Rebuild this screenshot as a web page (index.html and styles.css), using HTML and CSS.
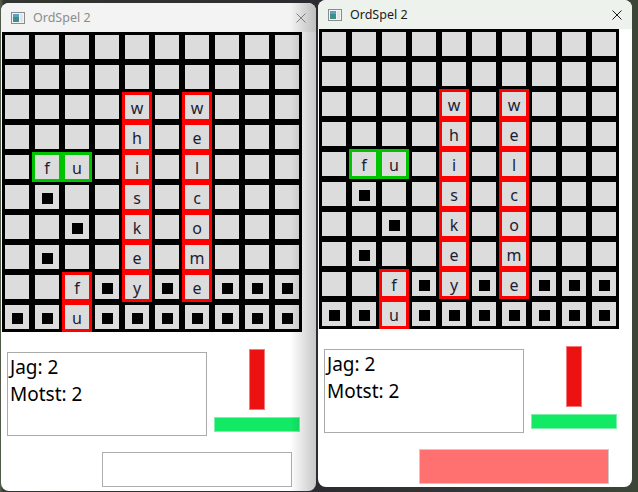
FILE: index.html
```html
<!DOCTYPE html>
<html lang="sv">
<head>
    <meta charset="UTF-8">
    <meta name="viewport" content="width=device-width, initial-scale=1.0">
    <title>OrdSpel 2</title>
    <link rel="stylesheet" href="styles.css">
</head>
<body>
    <div class="desktop">
        <div class="window inactive win-left">
            <div class="titlebar">
                <svg class="app-icon" width="14" height="12" viewBox="0 0 14 12">
                    <rect x="0.5" y="0.5" width="13" height="11" fill="#f4f4f4" stroke="#8a8a8a"/>
                    <rect x="2" y="2" width="6" height="8" fill="#3f8f86"/>
                    <rect x="2" y="2" width="6" height="3" fill="#5aa0c8"/>
                    <rect x="9" y="2" width="3" height="8" fill="#dfe6e8"/>
                </svg>
                <span class="title">OrdSpel 2</span>
                <svg class="close" width="10" height="10" viewBox="0 0 10 10">
                    <path d="M0.5 0.5 L9.5 9.5 M9.5 0.5 L0.5 9.5" stroke="currentColor" stroke-width="1"/>
                </svg>
            </div>
            <div class="board"></div>
            <div class="lower">
                <div class="score">
                    <div>Jag: 2</div>
                    <div>Motst: 2</div>
                </div>
                <div class="meter">
                    <div class="bar-red"></div>
                    <div class="bar-green"></div>
                </div>
            </div>
            <div class="action"></div>
        </div>

        <div class="window active win-right">
            <div class="titlebar">
                <svg class="app-icon" width="14" height="12" viewBox="0 0 14 12">
                    <rect x="0.5" y="0.5" width="13" height="11" fill="#f4f4f4" stroke="#8a8a8a"/>
                    <rect x="2" y="2" width="6" height="8" fill="#3f8f86"/>
                    <rect x="2" y="2" width="6" height="3" fill="#5aa0c8"/>
                    <rect x="9" y="2" width="3" height="8" fill="#dfe6e8"/>
                </svg>
                <span class="title">OrdSpel 2</span>
                <svg class="close" width="10" height="10" viewBox="0 0 10 10">
                    <path d="M0.5 0.5 L9.5 9.5 M9.5 0.5 L0.5 9.5" stroke="currentColor" stroke-width="1"/>
                </svg>
            </div>
            <div class="board"></div>
            <div class="lower">
                <div class="score">
                    <div>Jag: 2</div>
                    <div>Motst: 2</div>
                </div>
                <div class="meter">
                    <div class="bar-red"></div>
                    <div class="bar-green"></div>
                </div>
            </div>
            <div class="action pressed"></div>
        </div>
    </div>

    <script>
        // letters on the board, '#' = blocked square
        const board = [
            "..........",
            "..........",
            "....w.w...",
            "....h.e...",
            ".fu.i.l...",
            ".#..s.c...",
            "..#.k.o...",
            ".#..e.m...",
            "..f#y#e###",
            "##u#######"
        ];
        // r = word from opponent, g = own word
        const marks = [
            "..........",
            "..........",
            "....r.r...",
            "....r.r...",
            ".gg.r.r...",
            "....r.r...",
            "....r.r...",
            "....r.r...",
            "..r.r.r...",
            "..r......."
        ];

        document.querySelectorAll('.board').forEach(function(el) {
            for (let r = 0; r < 10; r++) {
                for (let c = 0; c < 10; c++) {
                    const cell = document.createElement('div');
                    cell.className = 'cell';
                    const ch = board[r][c];
                    const m = marks[r][c];
                    if (m === 'r') cell.classList.add('mark-red');
                    if (m === 'g') cell.classList.add('mark-green');
                    if (ch === '#') {
                        const block = document.createElement('span');
                        block.className = 'block';
                        cell.appendChild(block);
                    } else if (ch !== '.') {
                        cell.textContent = ch;
                    }
                    el.appendChild(cell);
                }
            }
        });
    </script>
</body>
</html>
```

FILE: styles.css
```css
* {
    box-sizing: border-box;
}
body {
    margin: 0;
    font-family: "Noto Sans", "DejaVu Sans", sans-serif;
}
.desktop {
    position: relative;
    width: 638px;
    height: 492px;
    overflow: hidden;
    background: linear-gradient(to right, #56604d 0px, #33352f 4px, #2c2b31 50%, #3b4636 100%);
}
.window {
    position: absolute;
    background-color: #fff;
    border-radius: 8px;
    overflow: hidden;
}
.win-left {
    left: 1px;
    top: 3px;
    width: 315px;
    height: 488px;
}
.win-right {
    left: 318px;
    top: 0;
    width: 314px;
    height: 487px;
}
/* shadow thrown by the active window */
.inactive::after {
    content: "";
    position: absolute;
    top: 0;
    right: 0;
    bottom: 0;
    width: 26px;
    background: linear-gradient(to right, rgba(0, 0, 0, 0), rgba(0, 0, 0, 0.22));
}
.titlebar {
    display: flex;
    align-items: center;
    height: 29px;
    padding: 0 10px 0 10px;
}
.inactive .titlebar {
    background-color: #f3f3f3;
    color: #8c8c8c;
}
.active .titlebar {
    background-color: #edf2ec;
    color: #1b1b1b;
}
.app-icon {
    flex: none;
}
.title {
    margin-left: 8px;
    font-size: 12.5px;
    flex: 1;
}
.close {
    flex: none;
}
.board {
    display: grid;
    grid-template-columns: repeat(10, 24px);
    grid-auto-rows: 24px;
    gap: 6px;
    width: 300px;
    height: 300px;
    margin-left: 1px;
    padding: 3px;
    background-color: #000;
}
.cell {
    display: flex;
    align-items: center;
    justify-content: center;
    background-color: #dcdcdc;
    font-size: 16px;
    line-height: 24px;
    color: #1c1c34;
    padding-top: 1px;
}
.mark-red {
    outline: 3px solid #ff0000;
}
.mark-green {
    outline: 3px solid #00c400;
}
.block {
    width: 11px;
    height: 11px;
    margin-top: 2px;
    background-color: #000;
}
.lower {
    display: flex;
    align-items: flex-start;
    margin-top: 17px;
    padding-left: 6px;
}
.score {
    width: 200px;
    height: 84px;
    margin-top: 3px;
    padding: 1px 0 0 2px;
    border: 1px solid #ababab;
    font-size: 19px;
    line-height: 27px;
    color: #000;
}
.meter {
    width: 86px;
    margin-left: 7px;
}
.bar-red {
    width: 16px;
    height: 61px;
    margin: 0 auto;
    background-color: #ec1212;
    border: 1px solid #f47a7a;
}
.bar-green {
    height: 15px;
    margin-top: 7px;
    background-color: #12ea66;
    border: 1px solid #7af0a8;
}
.action {
    width: 190px;
    height: 35px;
    margin-top: 16px;
    margin-left: 101px;
    border: 1px solid #adadad;
    background-color: #fff;
}
.action.pressed {
    background-color: #ff7070;
    border-color: #cccccc;
}
```
